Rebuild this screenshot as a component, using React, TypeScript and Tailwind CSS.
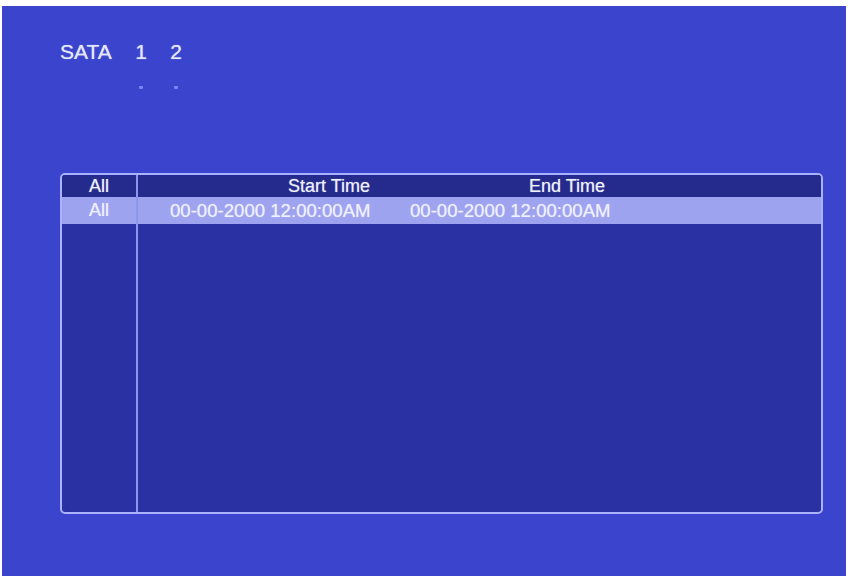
export default function App() {
  const font = { fontFamily: '"Liberation Sans", Arial, sans-serif' };

  return (
    <div className="w-[851px] h-[581px] bg-white pt-[6px] pl-[2px] pr-[5px] pb-[5px]" style={font}>
      <div className="w-full h-full bg-[#3b44cd] pt-[35px] pl-[58px] flex flex-col">
        {/* Disk selector */}
        <div className="flex items-start text-[#e4e8ff] text-[21px] leading-none [text-shadow:0_0_1px_rgba(255,255,255,0.7)]">
          <span className="w-[54px]">SATA</span>
          <div className="flex gap-[15px] ml-[17px]">
            {['1', '2'].map((n) => (
              <div key={n} className="w-[20px] flex flex-col items-center">
                <span>{n}</span>
                <span className="mt-[24px] w-[4px] h-[3px] rounded-[1px] bg-[#7a85f7]" />
              </div>
            ))}
          </div>
        </div>

        {/* Record list */}
        <div className="mt-[84px] w-[763px] h-[341px] border-2 border-[#aab2ff] rounded-[5px] bg-[#2a31a3] flex overflow-hidden text-[18px] text-[#eef0ff] [text-shadow:0_0_1px_rgba(255,255,255,0.6)]">
          <div className="w-[76px] border-r-2 border-[#8c95f0] flex flex-col">
            <div className="h-[22px] leading-[22px] bg-[#242b8d] text-center">All</div>
            <div className="h-[27px] leading-[27px] bg-[#9ea3ef] text-center">All</div>
          </div>
          <div className="flex-1 flex flex-col">
            <div className="h-[22px] leading-[22px] bg-[#242b8d] flex">
              <span className="w-[232px] text-right">Start Time</span>
              <span className="w-[394px] text-center">End Time</span>
            </div>
            <div className="h-[27px] leading-[27px] bg-[#9ea3ef] flex pl-[32px] text-[18.6px]">
              <span className="w-[240px]">00-00-2000 12:00:00AM</span>
              <span>00-00-2000 12:00:00AM</span>
            </div>
          </div>
        </div>
      </div>
    </div>
  );
}
